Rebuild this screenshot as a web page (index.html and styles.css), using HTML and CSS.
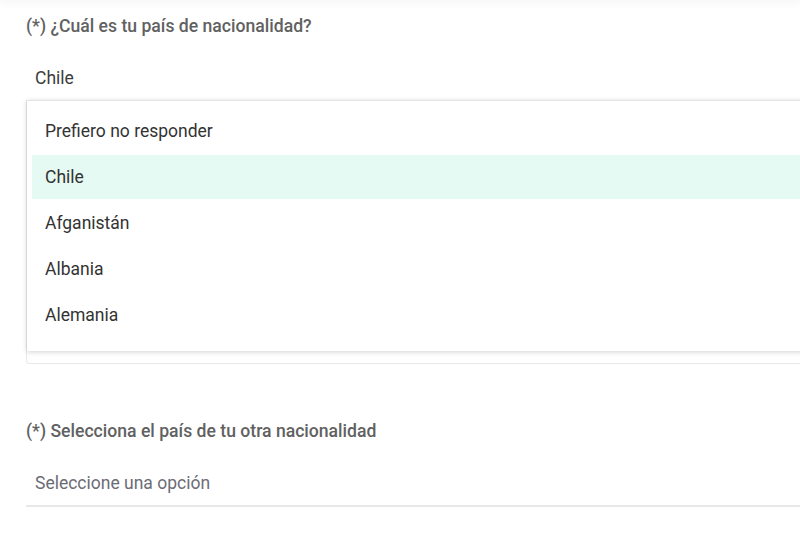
FILE: index.html
```html
<!DOCTYPE html>
<html lang="es">
<head>
<meta charset="utf-8">
<title>Nacionalidad</title>
<link rel="stylesheet" href="styles.css">
</head>
<body>
<div class="topbar"></div>
<form class="form">
  <div class="field">
    <div class="label">(*) ¿Cuál es tu país de nacionalidad?</div>
    <div class="value">Chile</div>
    <div class="dropdown">
      <ul class="menu">
        <li class="item">Prefiero no responder</li>
        <li class="item active">Chile</li>
        <li class="item">Afganistán</li>
        <li class="item">Albania</li>
        <li class="item">Alemania</li>
      </ul>
    </div>
  </div>
  <div class="field second">
    <div class="label">(*) Selecciona el país de tu otra nacionalidad</div>
    <div class="value placeholder">Seleccione una opción</div>
  </div>
</form>
</body>
</html>
```
FILE: styles.css
```css
html, body {
  margin: 0;
  padding: 0;
  overflow: hidden;
  background: #ffffff;
}
body {
  font-family: Roboto, "Liberation Sans", sans-serif;
  width: 800px;
  height: 545px;
}
.topbar {
  height: 0;
  box-shadow: 0 0 9px 2px rgba(0, 0, 0, 0.07);
}
.form {
  padding: 16px 0 0 26px;
  margin: 0;
}
.field {
  width: 800px;
}
.label {
  font-size: 17.6px;
  font-weight: 500;
  line-height: 21px;
  color: #616161;
}
.value {
  margin-top: 19px;
  height: 44px;
  line-height: 45px;
  padding-left: 9px;
  font-size: 17.5px;
  color: #3d3d3d;
}
.dropdown {
  height: 263px;
  border-left: 1px solid #e8e8ea;
  border-bottom: 1px solid #e8e8ea;
  border-radius: 0 0 0 4px;
}
.menu {
  list-style: none;
  margin: 0;
  padding: 8px 0 14px 5px;
  display: flex;
  flex-direction: column;
  gap: 2px;
  background: #ffffff;
  box-shadow: 0 1px 5px rgba(0, 0, 0, 0.18);
  border-top: 1px solid #e4e4e8;
}
.item {
  height: 44px;
  line-height: 45px;
  padding-left: 13px;
  font-size: 17.5px;
  color: #333333;
}
.item.active {
  background: #e5faf2;
}
.second {
  margin-top: 57px;
}
.placeholder {
  color: #6c6c75;
  border-bottom: 2px solid #e8e8ea;
}
```
